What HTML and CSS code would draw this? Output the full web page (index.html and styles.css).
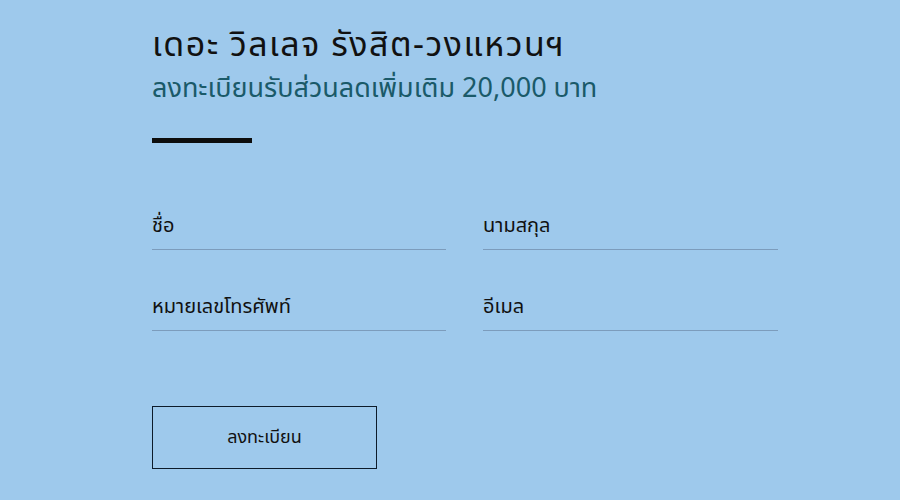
FILE: index.html
```html
<!DOCTYPE html>
<html lang="th">
<head>
<meta charset="utf-8">
<link rel="stylesheet" href="styles.css">
</head>
<body>
<main class="page">
  <h1 class="title">เดอะ วิลเลจ รังสิต-วงแหวนฯ</h1>
  <p class="subtitle">ลงทะเบียนรับส่วนลดเพิ่มเติม 20,000 บาท</p>
  <div class="bar"></div>
  <form class="form">
    <div class="grid">
      <label class="field"><span class="label">ชื่อ</span></label>
      <label class="field"><span class="label">นามสกุล</span></label>
      <label class="field"><span class="label">หมายเลขโทรศัพท์</span></label>
      <label class="field"><span class="label">อีเมล</span></label>
    </div>
    <button type="button" class="submit">ลงทะเบียน</button>
  </form>
</main>
</body>
</html>
```
FILE: styles.css
```css
html, body {
  margin: 0;
  padding: 0;
}
body {
  background: #9ec9ec;
  font-family: "Noto Sans Thai", "Noto Sans Thai UI", "Noto Sans", sans-serif;
  color: #111;
  width: 900px;
  height: 500px;
  overflow: hidden;
}
.page {
  padding: 25px 0 0 152px;
}
.title {
  margin: 0;
  font-weight: 400;
  font-size: 34px;
  line-height: 42px;
  letter-spacing: 1.5px;
  color: #111;
  white-space: nowrap;
}
.subtitle {
  margin: 5px 0 0;
  font-size: 27px;
  line-height: 34px;
  color: #1a5a69;
  white-space: nowrap;
}
.bar {
  width: 100px;
  height: 5px;
  background: #0d0d0d;
  margin-top: 32px;
}
.form {
  margin-top: 69px;
}
.grid {
  display: grid;
  grid-template-columns: 294px 295px;
  column-gap: 37px;
  row-gap: 43px;
  width: 626px;
}
.field {
  display: block;
  border-bottom: 1px solid #7c9cbc;
  height: 38px;
  box-sizing: border-box;
}
.label {
  display: block;
  font-size: 20px;
  line-height: 28px;
}
.submit {
  display: block;
  margin-top: 75px;
  width: 225px;
  height: 63px;
  padding: 0;
  background: transparent;
  border: 1px solid #0d1b2a;
  font-family: inherit;
  font-size: 18px;
  color: #111;
  cursor: pointer;
}
```
